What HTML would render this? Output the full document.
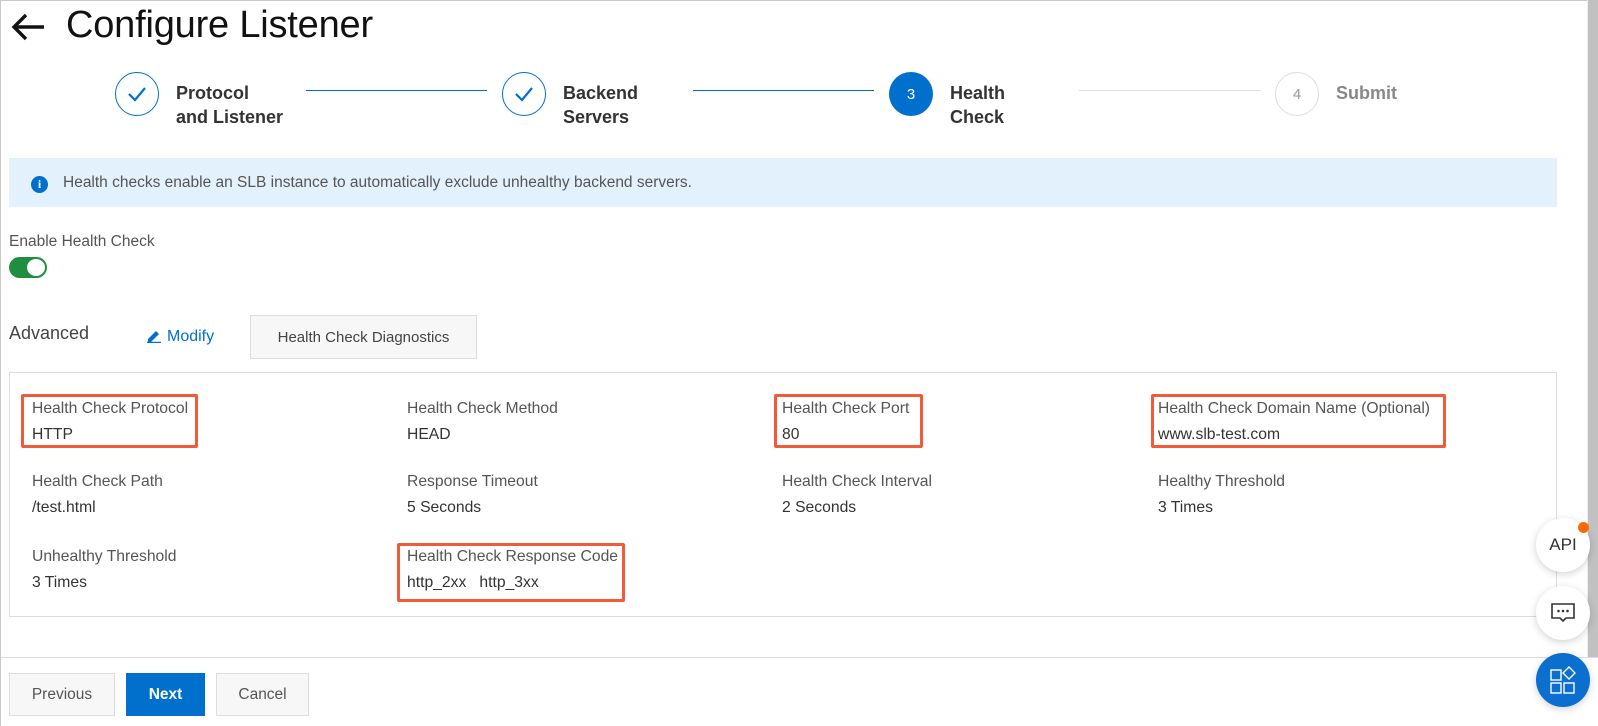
<!DOCTYPE html>
<html><head><meta charset="utf-8"><style>
*{box-sizing:border-box;margin:0;padding:0}
body{width:1598px;height:726px;overflow:hidden;background:#fff;font-family:"Liberation Sans",Arial,sans-serif;position:relative;color:#333}
.frame{position:absolute;left:0;top:0;width:1598px;height:726px;border:1px solid #c8c8c8;border-right:none}
.abs{position:absolute}
.title{left:66px;top:4px;font-size:38px;color:#111;letter-spacing:-0.2px}
.circ{position:absolute;width:44px;height:44px;border-radius:50%;top:72px;display:flex;align-items:center;justify-content:center;font-size:15px}
.done{border:1.5px solid #0070cc}
.cur{background:#0070cc;color:#fff}
.todo{border:1.5px solid #ddd;color:#999}
.st{position:absolute;top:81px;font-size:18px;font-weight:bold;line-height:24px;color:#333}
.ln{position:absolute;top:90px;height:1px;background:#0070cc}
.info{left:9px;top:158px;width:1548px;height:49px;background:#e3f1fc}
.lbl{font-size:15.7px;color:#555}
.val{font-size:15.7px;color:#333}
.red{position:absolute;border:3px solid #f25a3a;border-radius:2px}
.btn{position:absolute;top:673px;height:43px;border:1px solid #ddd;background:#f7f7f7;font-size:15.5px;color:#555;display:flex;align-items:center;justify-content:center}
.fab{position:absolute;width:54px;height:54px;border-radius:50%;background:#fff;box-shadow:0 2px 8px rgba(0,0,0,.18);display:flex;align-items:center;justify-content:center}
</style></head><body>
<div class="frame"></div>
<div class="abs" style="left:1587px;top:0;width:1px;height:657px;background:#eee"></div>
<div class="abs" style="left:1588px;top:0;width:10px;height:657px;background:#c1c1c1"></div>
<svg class="abs" style="left:11px;top:13px" width="34" height="28" viewBox="0 0 34 28"><path d="M33 14H4M15 2L3 14l12 12" fill="none" stroke="#111" stroke-width="3.4"/></svg>
<div class="abs title">Configure Listener</div>

<div class="circ done" style="left:115px"><svg width="20" height="16"><path d="M2 8l6 6L18 2" fill="none" stroke="#0070cc" stroke-width="2.2"/></svg></div>
<div class="st" style="left:176px">Protocol<br>and Listener</div>
<div class="ln" style="left:306px;width:181px"></div>
<div class="circ done" style="left:502px"><svg width="20" height="16"><path d="M2 8l6 6L18 2" fill="none" stroke="#0070cc" stroke-width="2.2"/></svg></div>
<div class="st" style="left:563px">Backend<br>Servers</div>
<div class="ln" style="left:693px;width:181px"></div>
<div class="circ cur" style="left:889px">3</div>
<div class="st" style="left:950px">Health<br>Check</div>
<div class="ln" style="left:1079px;width:182px;background:#ddd"></div>
<div class="circ todo" style="left:1275px">4</div>
<div class="st" style="left:1336px;color:#888">Submit</div>

<div class="abs info"></div>
<div class="abs" style="left:31px;top:176px;width:17px;height:17px;border-radius:50%;background:#0070cc;color:#fff;font-size:12px;font-weight:bold;text-align:center;line-height:17px;font-family:'Liberation Serif',serif">i</div>
<div class="abs" style="left:63px;top:174px;font-size:15.5px;color:#555">Health checks enable an SLB instance to automatically exclude unhealthy backend servers.</div>

<div class="abs" style="left:9px;top:233px;font-size:15.5px;color:#555">Enable Health Check</div>
<div class="abs" style="left:9px;top:257px;width:38px;height:21px;border-radius:11px;background:#1f8f3f"></div>
<div class="abs" style="left:27px;top:259px;width:18px;height:17px;border-radius:50%;background:#fff"></div>

<div class="abs" style="left:9px;top:323px;font-size:18px;color:#444">Advanced</div>
<svg class="abs" style="left:146px;top:329px" width="16" height="14"><path d="M2 10l8-8 3 3-8 8H2z" fill="#0070cc"/><path d="M1 13.5h14" stroke="#0070cc" stroke-width="1.5"/></svg>
<div class="abs" style="left:167px;top:328px;font-size:16px;color:#0070cc">Modify</div>
<div class="abs" style="left:250px;top:315px;width:227px;height:44px;border:1px solid #ddd;background:#f7f7f7;font-size:15px;color:#444;display:flex;align-items:center;justify-content:center">Health Check Diagnostics</div>

<div class="abs" style="left:9px;top:372px;width:1548px;height:245px;border:1px solid #ddd"></div>

<div class="abs lbl" style="left:32px;top:400px">Health Check Protocol</div><div class="abs val" style="left:32px;top:426px">HTTP</div>
<div class="abs lbl" style="left:407px;top:400px">Health Check Method</div><div class="abs val" style="left:407px;top:426px">HEAD</div>
<div class="abs lbl" style="left:782px;top:400px">Health Check Port</div><div class="abs val" style="left:782px;top:426px">80</div>
<div class="abs lbl" style="left:1158px;top:400px">Health Check Domain Name (Optional)</div><div class="abs val" style="left:1158px;top:426px">www.slb-test.com</div>

<div class="abs lbl" style="left:32px;top:473px">Health Check Path</div><div class="abs val" style="left:32px;top:499px">/test.html</div>
<div class="abs lbl" style="left:407px;top:473px">Response Timeout</div><div class="abs val" style="left:407px;top:499px">5 Seconds</div>
<div class="abs lbl" style="left:782px;top:473px">Health Check Interval</div><div class="abs val" style="left:782px;top:499px">2 Seconds</div>
<div class="abs lbl" style="left:1158px;top:473px">Healthy Threshold</div><div class="abs val" style="left:1158px;top:499px">3 Times</div>

<div class="abs lbl" style="left:32px;top:548px">Unhealthy Threshold</div><div class="abs val" style="left:32px;top:574px">3 Times</div>
<div class="abs lbl" style="left:407px;top:548px">Health Check Response Code</div><div class="abs val" style="left:407px;top:574px">http_2xx&nbsp;&nbsp;&nbsp;http_3xx</div>

<div class="red" style="left:21px;top:394px;width:177px;height:54px"></div>
<div class="red" style="left:774px;top:394px;width:149px;height:54px"></div>
<div class="red" style="left:1151px;top:394px;width:295px;height:54px"></div>
<div class="red" style="left:397px;top:543px;width:228px;height:59px"></div>

<div class="abs" style="left:1px;top:657px;width:1597px;height:69px;background:#fff;border-top:1px solid #ddd"></div>
<div class="btn" style="left:9px;width:106px">Previous</div>
<div class="btn" style="left:126px;width:79px;background:#0070cc;border-color:#0070cc;color:#fff;font-weight:bold">Next</div>
<div class="btn" style="left:216px;width:93px">Cancel</div>

<div class="fab" style="left:1536px;top:518px;font-size:17px;color:#333">API</div>
<div class="abs" style="left:1578px;top:522px;width:11px;height:11px;border-radius:50%;background:#ff6a00"></div>
<div class="fab" style="left:1536px;top:586px"><svg width="26" height="22"><path d="M2 2h22v14H16l-3 3-3-3H2z" fill="none" stroke="#333" stroke-width="1.6"/><circle cx="8.5" cy="9" r="1.3" fill="#333"/><circle cx="13" cy="9" r="1.3" fill="#333"/><circle cx="17.5" cy="9" r="1.3" fill="#333"/></svg></div>
<div class="fab" style="left:1536px;top:653px;background:#0a6fcf"><svg width="28" height="28"><g fill="none" stroke="#fff" stroke-width="1.4"><rect x="2" y="4" width="10" height="10"/><rect x="2" y="17" width="10" height="10"/><rect x="15" y="17" width="10" height="10"/><path d="M20 1l6 6-6 6-6-6z"/></g></svg></div>
</body></html>
